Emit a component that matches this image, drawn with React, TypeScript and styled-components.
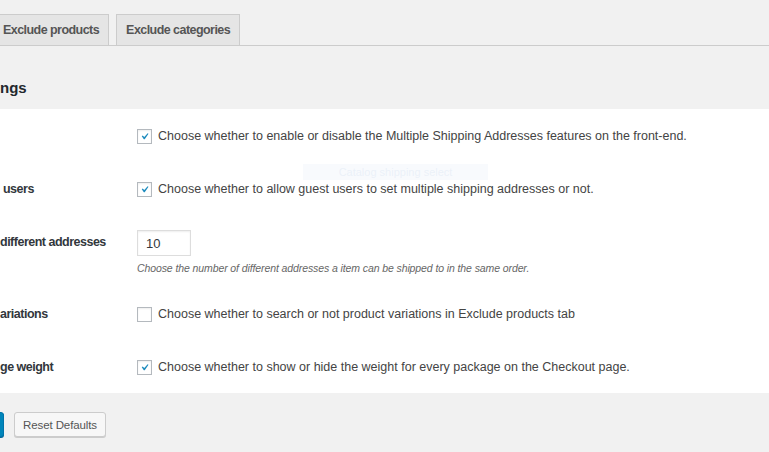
import React from 'react'
import styled, { createGlobalStyle } from 'styled-components'

const GlobalStyle = createGlobalStyle`
  html, body {
    margin: 0;
    padding: 0;
    background: #f1f1f1;
  }
  body {
    font-family: 'Liberation Sans', Arial, sans-serif;
    font-size: 12.5px;
    color: #444;
    overflow: hidden;
  }
`

interface Setting {
  label: string
  text: string
  checked: boolean
}

const topSettings: Setting[] = [
  { label: '', text: 'Choose whether to enable or disable the Multiple Shipping Addresses features on the front-end.', checked: true },
  { label: '\u00a0users', text: 'Choose whether to allow guest users to set multiple shipping addresses or not.', checked: true }
]

const bottomSettings: Setting[] = [
  { label: 'ariations', text: 'Choose whether to search or not product variations in Exclude products tab', checked: false },
  { label: 'ge weight', text: 'Choose whether to show or hide the weight for every package on the Checkout page.', checked: true }
]

function CheckRow({ setting }: { setting: Setting }): JSX.Element {
  return (
    <Row>
      <Label>{setting.label}</Label>
      <Field>
        <CheckBox>
          {setting.checked && (
            <svg width='13' height='13' viewBox='0 0 20 20'>
              <path d='M14.83 4.89l1.34.94-5.81 8.38H9.02L5.78 9.67l1.34-1.25 2.57 2.4z' fill='#1e8cbe' />
            </svg>
          )}
        </CheckBox>
        <span>{setting.text}</span>
      </Field>
    </Row>
  )
}

export default function App(): JSX.Element {
  return (
    <Page>
      <GlobalStyle />
      <Tabs>
        <Tab>Exclude products</Tab>
        <Tab>Exclude categories</Tab>
      </Tabs>
      <Heading>ngs</Heading>
      <FormTable>
        {topSettings.map(s => (
          <CheckRow setting={s} key={s.text} />
        ))}
        <Row $compact>
          <Label $offset>different addresses</Label>
          <Field $column>
            <NumberInput defaultValue='10' />
            <Description>Choose the number of different addresses a item can be shipped to in the same order.</Description>
          </Field>
        </Row>
        {bottomSettings.map(s => (
          <CheckRow setting={s} key={s.text} />
        ))}
        <Ghost>Catalog shipping select</Ghost>
      </FormTable>
      <Actions>
        <Button $primary>Save changes</Button>
        <Button>Reset Defaults</Button>
      </Actions>
    </Page>
  )
}

// Styled components
const Page = styled.div`
  width: 769px;
  height: 452px;
  overflow: hidden;
`
const Tabs = styled.div`
  display: flex;
  gap: 7px;
  padding-top: 14px;
  margin-left: -7px;
  border-bottom: 1px solid #ccc;
`
const Tab = styled.div`
  background: #e5e5e5;
  border: 1px solid #ccc;
  border-bottom: none;
  padding: 0 9px;
  height: 30px;
  line-height: 30px;
  font-weight: 700;
  font-size: 12.5px;
  letter-spacing: -0.55px;
  color: #555;
`
const Heading = styled.h2`
  margin: 33px 0 0;
  height: 30px;
  font-size: 15px;
  font-weight: 600;
  color: #23282d;
  line-height: 18px;
`
const FormTable = styled.div`
  position: relative;
  background: #fff;
  display: flex;
  flex-direction: column;
`
const Row = styled.div<{ $compact?: boolean }>`
  display: flex;
  align-items: flex-start;
  padding: ${p => (p.$compact ? '15px 0 12px' : '19px 0 17px')};
`
const Label = styled.div<{ $offset?: boolean }>`
  width: 137px;
  flex-shrink: 0;
  font-weight: 700;
  letter-spacing: -0.5px;
  color: #32373c;
  line-height: 17px;
  white-space: pre;
  margin-top: ${p => (p.$offset ? '4px' : '0')};
`
const Field = styled.div<{ $column?: boolean }>`
  display: flex;
  flex-direction: ${p => (p.$column ? 'column' : 'row')};
  align-items: ${p => (p.$column ? 'flex-start' : 'center')};
  gap: ${p => (p.$column ? '5px' : '6px')};
  line-height: 17px;
`
const CheckBox = styled.span`
  display: inline-flex;
  align-items: center;
  justify-content: center;
  width: 13px;
  height: 13px;
  border: 1px solid #b4b9be;
  background: #fff;
  box-shadow: inset 0 1px 2px rgba(0, 0, 0, 0.07);
`
const NumberInput = styled.input`
  box-sizing: border-box;
  width: 54px;
  height: 26px;
  margin: 0;
  padding: 0 8px;
  border: 1px solid #ddd;
  box-shadow: inset 0 1px 2px rgba(0, 0, 0, 0.07);
  font-family: inherit;
  font-size: 13px;
  color: #32373c;
`
const Description = styled.p`
  margin: 0;
  font-size: 10.5px;
  letter-spacing: -0.1px;
  font-style: italic;
  color: #666;
  line-height: 14px;
`
const Ghost = styled.div`
  position: absolute;
  left: 303px;
  top: 55px;
  width: 185px;
  height: 16px;
  background: rgba(232, 240, 250, 0.3);
  color: rgba(210, 222, 240, 0.35);
  font-size: 11px;
  text-align: center;
  line-height: 16px;
`
const Actions = styled.div`
  display: flex;
  gap: 10px;
  margin: 19px 0 0 -96px;
`
const Button = styled.button<{ $primary?: boolean }>`
  box-sizing: border-box;
  height: 25px;
  padding: 0 8px;
  font-family: inherit;
  font-size: 11.5px;
  letter-spacing: -0.1px;
  border-radius: 3px;
  border: 1px solid ${p => (p.$primary ? '#0073aa' : '#ccc')};
  background: ${p => (p.$primary ? '#0085ba' : '#f7f7f7')};
  color: ${p => (p.$primary ? '#fff' : '#555')};
  box-shadow: 0 1px 0 ${p => (p.$primary ? '#006799' : '#ccc')};
  width: ${p => (p.$primary ? '100px' : 'auto')};
`
